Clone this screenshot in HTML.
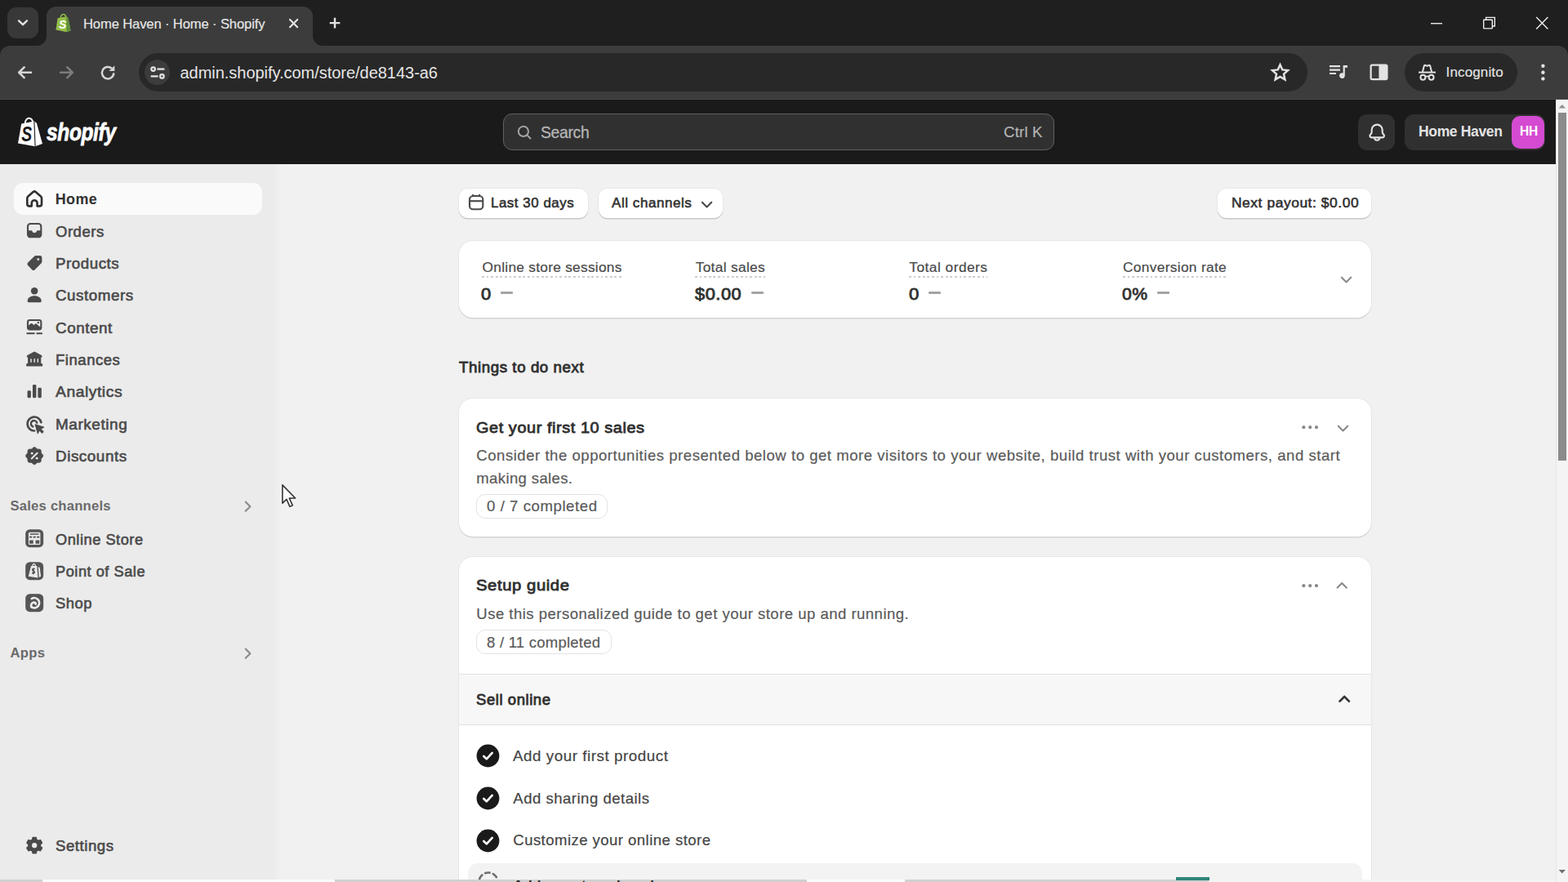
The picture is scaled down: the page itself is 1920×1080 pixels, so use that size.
<!DOCTYPE html>
<html lang="en"><head><meta charset="utf-8"><title>Home Haven · Home · Shopify</title>
<style>
*{box-sizing:border-box;margin:0;padding:0}
html,body{width:1920px;height:1080px;overflow:hidden;background:#f1f1f1;font-family:"Liberation Sans",sans-serif}
#root{position:relative;width:1920px;height:1080px;overflow:hidden}
#root div,#root svg,.t{position:absolute}
.t{white-space:nowrap;line-height:1;display:block;transform-origin:0 50%}
/* chrome */
.tabstrip{left:0;top:0;width:1920px;height:80px;background:#1f1f1f}
.tabsearch{left:9px;top:9px;width:38px;height:38px;border-radius:11px;background:#383838}
.tab{left:57px;top:8px;width:326px;height:49px;background:#3c3c3c;border-radius:12px 12px 0 0}
.tabfl{left:45px;top:44px;width:12px;height:12px;background:radial-gradient(circle at 0 0,rgba(0,0,0,0) 11.5px,#3c3c3c 12.5px)}
.tabfr{left:383px;top:44px;width:12px;height:12px;background:radial-gradient(circle at 100% 0,rgba(0,0,0,0) 11.5px,#3c3c3c 12.5px)}
.toolbar{left:0;top:56px;width:1920px;height:66px;background:#3c3c3c;border-radius:12px 12px 0 0;border-bottom:1px solid #4a4a4a}
.omni{left:170px;top:65px;width:1431px;height:47px;border-radius:24px;background:#282828}
.omnichip{left:177px;top:73px;width:31px;height:31px;border-radius:16px;background:#3c3c3c}
.incog{left:1720px;top:65px;width:138px;height:47px;border-radius:24px;background:#282828}
/* shopify bar */
.sbar{left:0;top:122px;width:1905px;height:79px;background:#1a1a1a}
.search{left:616px;top:139px;width:675px;height:45px;border-radius:11px;background:#303030;border:1.4px solid #616161}
.bellbtn{left:1663px;top:140px;width:45px;height:44px;border-radius:11px;background:#303030}
.store{left:1720px;top:140px;width:172px;height:44px;border-radius:11px;background:#303030}
.avatar{left:1851px;top:142px;width:40px;height:40px;border-radius:10px;background:#d44bd1}
/* scrollbar */
.sbtrack{left:1905px;top:122px;width:15px;height:958px;background:#f4f4f4;border-left:1px solid #e6e6e6}
.sbthumb{left:1908px;top:138px;width:10px;height:426px;background:#8b8b8b}
/* sidebar */
.side{left:0;top:201px;width:346px;height:879px;background:linear-gradient(90deg,#ebebeb 0,#ebebeb 334px,#f1f1f1 346px)}
.navsel{left:17px;top:224px;width:304px;height:39px;border-radius:11px;background:#fafafa}
/* main */
.btn{background:#fff;border-radius:11px;box-shadow:0 1.5px 0 0 #c9c9c9,0 0 0 1px rgba(0,0,0,.04)}
.card{background:#fff;border-radius:17px;box-shadow:0 1.5px 0 0 #d4d4d4,0 0 0 1px rgba(0,0,0,.045)}
.badge{border:1.4px solid #e3e3e3;border-radius:11px;background:#fff}
.dot{height:2.5px;background:repeating-linear-gradient(90deg,#cdcdcd 0 2.8px,transparent 2.8px 5.6px)}
.dash{height:2.4px;background:#a3a3a3;border-radius:1px}
.band{left:562px;top:825px;width:1117px;height:63px;background:#f7f7f7;border-top:1.4px solid #e3e3e3;border-bottom:1.4px solid #e3e3e3}
.hl{left:573px;top:1056.5px;width:1095px;height:60px;border-radius:12px;background:#f3f3f3}
.bstrip{top:1077px;height:3px}
#root .g{position:static;display:block;width:0;height:0}

</style></head><body>
<div id="root">
<!-- ===== browser chrome ===== -->
<div class="tabstrip"></div>
<div class="tabsearch"></div>
<div class="toolbar"></div>
<div class="tab"></div><div class="tabfl"></div><div class="tabfr"></div>
<div class="omni"></div><div class="omnichip"></div>
<div class="incog"></div>
<!-- ===== shopify top bar ===== -->
<div class="sbar"></div>
<div class="search"></div>
<div class="bellbtn"></div>
<div class="store"></div><div class="avatar"></div>
<!-- ===== scrollbar ===== -->
<div class="sbtrack"></div><div class="sbthumb"></div>
<!-- ===== sidebar ===== -->
<div class="side"></div>
<div class="navsel"></div>
<!-- ===== main ===== -->
<div class="btn" style="left:562px;top:231px;width:158px;height:36px"></div>
<div class="btn" style="left:733px;top:231px;width:152px;height:36px"></div>
<div class="btn" style="left:1491px;top:231px;width:188px;height:36px"></div>
<div class="card" style="left:562px;top:295px;width:1117px;height:94px"></div>
<div class="dot" style="left:590px;top:337.6px;width:171px"></div>
<div class="dot" style="left:851px;top:337.6px;width:86px"></div>
<div class="dot" style="left:1113px;top:337.6px;width:96px"></div>
<div class="dot" style="left:1375px;top:337.6px;width:127px"></div>
<div class="dash" style="left:613px;top:357.3px;width:15px"></div>
<div class="dash" style="left:920px;top:357.3px;width:15px"></div>
<div class="dash" style="left:1137px;top:357.3px;width:15px"></div>
<div class="dash" style="left:1417px;top:357.3px;width:15px"></div>
<div class="card" style="left:562px;top:488px;width:1117px;height:169px"></div>
<div class="badge" style="left:583px;top:605px;width:161px;height:30px"></div>
<div class="card" style="left:562px;top:682px;width:1117px;height:440px"></div>
<div class="badge" style="left:583px;top:771px;width:166px;height:30px"></div>
<div class="band"></div>
<div class="hl"></div>
<svg style="left:9.00px;top:9.00px" width="38.00" height="38.00" viewBox="0 0 38 38"><path d="M14 16.4 L19 21.2 L24 16.4" fill="none" stroke="#e3e3e3" stroke-width="2.4" stroke-linecap="round" stroke-linejoin="round"/></svg>
<svg style="left:66.00px;top:15.00px" width="24.00" height="26.00" viewBox="0 0 24 26"><path d="M4.6 7.2 L15.2 5.2 L17.4 6.4 L20.6 22.6 L15.6 24.2 L2.4 21.6 Z" fill="#95bf47"/><path d="M15.2 5.2 L17.4 6.4 L20.6 22.6 L15.6 24.2 Z" fill="#5e8e3e"/><path d="M8.2 7 C8.4 3.6 10.4 2.2 12 2.4 C13.8 2.6 14.6 4.4 14.8 6" fill="none" stroke="#95bf47" stroke-width="1.5"/><text x="6.0" y="19.6" font-family="Liberation Sans, sans-serif" font-size="14" font-weight="700" font-style="italic" fill="#fff">S</text></svg>
<svg style="left:350.00px;top:19.00px" width="20.00" height="20.00" viewBox="0 0 20 20"><path d="M5 5 L14.2 14.2 M14.2 5 L5 14.2" stroke="#e3e3e3" stroke-width="2.2" stroke-linecap="round"/></svg>
<svg style="left:400.00px;top:18.00px" width="20.00" height="20.00" viewBox="0 0 20 20"><path d="M10 3.8 V16.4 M3.7 10.1 H16.3" stroke="#e3e3e3" stroke-width="2.4" stroke-linecap="butt"/></svg>
<svg style="left:1749.00px;top:18.00px" width="20.00" height="20.00" viewBox="0 0 20 20"><path d="M3 10.75 H17" stroke="#f0f0f0" stroke-width="1.4"/></svg>
<svg style="left:1813.00px;top:18.00px" width="20.00" height="20.00" viewBox="0 0 20 20"><rect x="3.7" y="6.3" width="10.6" height="10.6" rx=".6" fill="none" stroke="#f0f0f0" stroke-width="1.4"/><path d="M6.6 6 V3.4 H17.3 V14 H14.6" fill="none" stroke="#f0f0f0" stroke-width="1.4"/></svg>
<svg style="left:1878.00px;top:18.00px" width="20.00" height="20.00" viewBox="0 0 20 20"><path d="M3.2 3 L17.4 17.4 M17.4 3 L3.2 17.4" stroke="#f0f0f0" stroke-width="1.4"/></svg>
<svg style="left:19.00px;top:77.00px" width="24.00" height="24.00" viewBox="0 0 24 24"><path d="M20 11.75 H5 M11.4 4.6 L4.2 11.75 L11.4 18.9" fill="none" stroke="#d6d6d6" stroke-width="2.5" stroke-linejoin="round"/></svg>
<svg style="left:69.00px;top:77.00px" width="24.00" height="24.00" viewBox="0 0 24 24"><path d="M4 11.75 H19 M12.6 4.6 L19.8 11.75 L12.6 18.9" fill="none" stroke="#7c7c7c" stroke-width="2.5" stroke-linejoin="round"/></svg>
<svg style="left:119.50px;top:76.50px" width="24.00" height="24.00" viewBox="0 0 24 24"><path d="M19.3 12.4 a7.2 7.2 0 1 1 -2.4 -5.6" fill="none" stroke="#d6d6d6" stroke-width="2.5"/><path d="M20.3 3.2 V10 H13.5 Z" fill="#d6d6d6"/></svg>
<svg style="left:180.50px;top:76.50px" width="24.00" height="24.00" viewBox="0 0 24 24"><circle cx="6.6" cy="7.6" r="2.3" fill="none" stroke="#e3e3e3" stroke-width="2.2"/><path d="M11.4 7.6 H20.4" stroke="#e3e3e3" stroke-width="2.3"/><circle cx="17.4" cy="16.4" r="2.3" fill="none" stroke="#e3e3e3" stroke-width="2.2"/><path d="M3.6 16.4 H12.6" stroke="#e3e3e3" stroke-width="2.3"/></svg>
<svg style="left:1555.00px;top:76.00px" width="25.00" height="25.00" viewBox="0 0 25 25"><path d="M12.5 3.2 L15.3 9.4 L22 10.1 L17 14.7 L18.4 21.4 L12.5 18 L6.6 21.4 L8 14.7 L3 10.1 L9.7 9.4 Z" fill="none" stroke="#e3e3e3" stroke-width="2.5" stroke-linejoin="miter"/></svg>
<svg style="left:1626.00px;top:77.00px" width="26.00" height="22.00" viewBox="0 0 26 22"><path d="M2 4.2 H15 M2 8.6 H15 M2 13 H10" stroke="#e3e3e3" stroke-width="2.2"/><path d="M18.6 3 H24 V5.8 H20.8 V15.6 a3.4 3.4 0 1 1 -2.2 -3.2 Z" fill="#e3e3e3"/></svg>
<svg style="left:1677.00px;top:78.00px" width="23.00" height="21.00" viewBox="0 0 23 21"><rect x="1.6" y="1.6" width="19.8" height="17.6" rx="1.6" fill="none" stroke="#e3e3e3" stroke-width="2.2"/><rect x="11.4" y="2" width="9.6" height="17" fill="#e3e3e3"/></svg>
<svg style="left:1735.00px;top:76.00px" width="25.00" height="25.00" viewBox="0 0 25 25"><path d="M2 12.6 H23" stroke="#e3e3e3" stroke-width="2"/><path d="M6.9 12 L8.9 4.6 Q9.2 3.6 10.2 3.9 L12.5 4.7 L14.8 3.9 Q15.8 3.6 16.1 4.6 L18.100 12" fill="none" stroke="#e3e3e3" stroke-width="2" stroke-linejoin="round"/><circle cx="7.4" cy="18.8" r="3" fill="none" stroke="#e3e3e3" stroke-width="2"/><circle cx="17.6" cy="18.8" r="3" fill="none" stroke="#e3e3e3" stroke-width="2"/><path d="M10.2 18 Q12.5 16.6 14.8 18" fill="none" stroke="#e3e3e3" stroke-width="1.8"/></svg>
<svg style="left:1883.00px;top:76.00px" width="12.00" height="25.00" viewBox="0 0 12 25"><circle cx="6.4" cy="4.8" r="2.2" fill="#e3e3e3"/><circle cx="6.4" cy="12.7" r="2.2" fill="#e3e3e3"/><circle cx="6.4" cy="20.4" r="2.2" fill="#e3e3e3"/></svg>
<svg style="left:1905.00px;top:122.00px" width="15.00" height="16.00" viewBox="0 0 15 16"><path d="M3.6 10.6 L7.8 6 L12 10.6 Z" fill="#8f8f8f"/></svg>
<svg style="left:1905.00px;top:1060.00px" width="15.00" height="16.00" viewBox="0 0 15 16"><path d="M3.6 5 L7.8 9.6 L12 5 Z" fill="#6f6f6f"/></svg>
<svg style="left:20.00px;top:142.00px" width="34.00" height="39.00" viewBox="0 0 34 39"><path d="M6.2 9.6 L21.6 6.6 L24.8 8.4 L32 34 L23 37.2 L2 33.4 Z" fill="#fff"/><path d="M21.9 7 L23.1 37" stroke="#1a1a1a" stroke-width="1.1"/><path d="M10.6 9.4 C11 4.6 13.6 2.4 16 2.8 C18.6 3.2 20 6 20.4 8.2" fill="none" stroke="#fff" stroke-width="1.9"/><text transform="translate(6.200 30.600) scale(.760 1)" font-family="Liberation Sans, sans-serif" font-size="25.500" font-weight="700" font-style="italic" fill="#1a1a1a">S</text></svg>
<svg style="left:627.83px;top:147.63px" width="28.33" height="28.33" viewBox="0 0 20 20" ><g fill="#a6a6a6"><path transform="translate(1 1) scale(.9)" fill-rule="evenodd" d="M12.323 13.383a5.5 5.5 0 1 1 1.06-1.06l2.897 2.897a.75.75 0 1 1-1.06 1.06l-2.897-2.897Zm.677-4.383a4 4 0 1 1-8 0 4 4 0 0 1 8 0Z"/></g></svg>
<svg style="left:1671.53px;top:148.13px" width="28.33" height="28.33" viewBox="0 0 20 20" ><g fill="#e3e3e3"><path d="M10 3.25a4.6 4.6 0 0 0-4.6 4.6v1.6c0 .7-.25 1.38-.7 1.92l-.55.66a1.45 1.45 0 0 0 1.1 2.37h9.5a1.45 1.45 0 0 0 1.1-2.37l-.55-.66a3 3 0 0 1-.7-1.92v-1.6a4.6 4.6 0 0 0-4.6-4.6Z" fill="none" stroke="#e3e3e3" stroke-width="1.5"/><path d="M7.900 14.700a2.100 2.100 0 0 0 4.200 0" fill="none" stroke="#e3e3e3" stroke-width="1.500"/></g></svg>
<svg style="left:27.53px;top:228.83px" width="28.33" height="28.33" viewBox="0 0 20 20" ><g fill="#303030"><path d="M8.900 4.300 Q10 3.350 11.100 4.300 L15.500 8.100 Q16.250 8.750 16.250 9.700 V14.600 A1.900 1.900 0 0 1 14.350 16.500 H12.400 V13.900 A2.400 2.400 0 0 0 7.600 13.900 V16.500 H5.650 A1.900 1.900 0 0 1 3.750 14.600 V9.700 Q3.750 8.750 4.500 8.100 Z" fill="none" stroke="#303030" stroke-width="1.850" stroke-linejoin="round"/></g></svg>
<svg style="left:27.53px;top:268.33px" width="28.33" height="28.33" viewBox="0 0 20 20" ><g fill="#4a4a4a"><path fill-rule="evenodd" d="M6.5 3.5h7a3 3 0 0 1 3 3v7a3 3 0 0 1-3 3h-7a3 3 0 0 1-3-3v-7a3 3 0 0 1 3-3Zm0 1.5A1.5 1.5 0 0 0 5 6.5V10h2.2c.45 0 .8.3.95.7a1.95 1.95 0 0 0 3.7 0c.15-.4.5-.7.95-.7H15V6.5A1.5 1.5 0 0 0 13.500 5h-7Z"/></g></svg>
<svg style="left:27.53px;top:307.83px" width="28.33" height="28.33" viewBox="0 0 20 20" ><g fill="#4a4a4a"><path fill-rule="evenodd" d="M11.2 3.5h3.55a1.75 1.75 0 0 1 1.75 1.75V8.8c0 .46-.18.9-.51 1.24l-5.6 5.6a1.75 1.75 0 0 1-2.48 0l-3.55-3.55a1.75 1.75 0 0 1 0-2.48l5.6-5.6c.33-.33.78-.51 1.24-.51Zm2.05 4.25a1 1 0 1 0 0-2 1 1 0 0 0 0 2Z"/></g></svg>
<svg style="left:27.53px;top:346.83px" width="28.33" height="28.33" viewBox="0 0 20 20" ><g fill="#4a4a4a"><circle cx="10" cy="6.5" r="3"/><path d="M4 15.1c0-2.6 2.7-4.35 6-4.35s6 1.75 6 4.35c0 .8-.65 1.4-1.45 1.4h-9.1C4.650 16.500 4 15.900 4 15.100Z"/></g></svg>
<svg style="left:27.53px;top:386.33px" width="28.33" height="28.33" viewBox="0 0 20 20" ><g fill="#4a4a4a"><path fill-rule="evenodd" d="M5.9 3.5h8.2a2.4 2.4 0 0 1 2.4 2.400v4.700a2.4 2.4 0 0 1-2.400 2.4H5.900a2.4 2.4 0 0 1-2.400-2.400V5.900a2.4 2.4 0 0 1 2.400-2.400Zm-.900 2.400v2.900l1.700-1.500a1.100 1.100 0 0 1 1.450 0l1.300 1.150 1.050-.85a1.100 1.100 0 0 1 1.400 0l3.100 2.600V5.900a.900.900 0 0 0-.900-.900H5.900a.900.900 0 0 0-.900.900Zm8.250 1.350a.9.9 0 1 0 0-1.800.9.9 0 0 0 0 1.800Z"/><path d="M3.75 15h6.000a.75.75 0 0 1 0 1.500h-6.000a.75.750 0 0 1 0-1.500Zm8.500 0h4.000a.75.75 0 0 1 0 1.500h-4.000a.750.750 0 0 1 0-1.500Z"/></g></svg>
<svg style="left:27.53px;top:425.83px" width="28.33" height="28.33" viewBox="0 0 20 20" ><g fill="#4a4a4a"><path d="M9.200 3.450a1.700 1.700 0 0 1 1.600 0l5 2.700c.550.300.800.750.800 1.300v.100c0 .350-.300.650-.650.650H15.700V13.500h.300c.600 0 1.100.500 1.100 1.100v.500c0 .400-.300.700-.700.700H3.600a.700.700 0 0 1-.700-.700v-.500c0-.600.500-1.100 1.100-1.100h.300V8.200H4.050a.650.650 0 0 1-.650-.650v-.100c0-.550.250-1 .800-1.300l5-2.700Z"/><path d="M6.550 9.300h1v3.300h-1zM9.500 9.300h1v3.300h-1zM12.450 9.300h1v3.300h-1z" fill="#ebebeb"/></g></svg>
<svg style="left:27.53px;top:465.33px" width="28.33" height="28.33" viewBox="0 0 20 20" ><g fill="#4a4a4a"><rect x="3.900" y="9.400" width="3.100" height="6.300" rx="1"/><rect x="8.450" y="4.200" width="3.100" height="11.500" rx="1"/><rect x="13" y="6.800" width="3.100" height="8.900" rx="1"/></g></svg>
<svg style="left:27.53px;top:504.83px" width="28.33" height="28.33" viewBox="0 0 20 20" ><g fill="#4a4a4a"><path d="M9.900 15.900a6 6 0 1 1 5.900-7.300" fill="none" stroke="#4a4a4a" stroke-width="1.900" stroke-linecap="round"/><path d="M8.700 12.300a2.700 2.700 0 1 1 3.500-3.400" fill="none" stroke="#4a4a4a" stroke-width="1.800" stroke-linecap="round"/><path d="M10.700 10.400 18 12.800 15.300 14.300 17.700 16.700 16.600 17.800 14.200 15.400 12.900 18.100Z" stroke="#4a4a4a" stroke-width=".800" stroke-linejoin="round"/></g></svg>
<svg style="left:27.53px;top:544.33px" width="28.33" height="28.33" viewBox="0 0 20 20" ><g fill="#4a4a4a"><path d="M10.00 2.45 L10.49 2.54 L10.95 2.79 L11.37 3.13 L11.74 3.50 L12.10 3.82 L12.47 4.04 L12.89 4.15 L13.36 4.18 L13.89 4.18 L14.43 4.23 L14.93 4.38 L15.34 4.66 L15.62 5.07 L15.77 5.57 L15.82 6.11 L15.82 6.64 L15.85 7.11 L15.96 7.53 L16.18 7.90 L16.50 8.26 L16.87 8.63 L17.21 9.05 L17.46 9.51 L17.55 10.00 L17.46 10.49 L17.21 10.95 L16.87 11.37 L16.50 11.74 L16.18 12.10 L15.96 12.47 L15.85 12.89 L15.82 13.36 L15.82 13.89 L15.77 14.43 L15.62 14.93 L15.34 15.34 L14.93 15.62 L14.43 15.77 L13.89 15.82 L13.36 15.82 L12.89 15.85 L12.47 15.96 L12.10 16.18 L11.74 16.50 L11.37 16.87 L10.95 17.21 L10.49 17.46 L10.00 17.55 L9.51 17.46 L9.05 17.21 L8.63 16.87 L8.26 16.50 L7.90 16.18 L7.53 15.96 L7.11 15.85 L6.64 15.82 L6.11 15.82 L5.57 15.77 L5.07 15.62 L4.66 15.34 L4.38 14.93 L4.23 14.43 L4.18 13.89 L4.18 13.36 L4.15 12.89 L4.04 12.47 L3.82 12.10 L3.50 11.74 L3.13 11.37 L2.79 10.95 L2.54 10.49 L2.45 10.00 L2.54 9.51 L2.79 9.05 L3.13 8.63 L3.50 8.26 L3.82 7.90 L4.04 7.53 L4.15 7.11 L4.18 6.64 L4.18 6.11 L4.23 5.57 L4.38 5.07 L4.66 4.66 L5.07 4.38 L5.57 4.23 L6.11 4.18 L6.64 4.18 L7.11 4.15 L7.53 4.04 L7.90 3.82 L8.26 3.50 L8.63 3.13 L9.05 2.79 L9.51 2.54Z" stroke="#4a4a4a" stroke-width=".400" stroke-linejoin="round"/><path d="M7.600 12.400l4.800-4.800" stroke="#ebebeb" stroke-width="1.400" stroke-linecap="round"/><circle cx="7.900" cy="7.900" r="1" fill="#ebebeb"/><circle cx="12.100" cy="12.100" r="1" fill="#ebebeb"/></g></svg>
<svg style="left:288.83px;top:605.83px" width="28.33" height="28.33" viewBox="0 0 20 20" ><g fill="#8a8a8a"><path d="M7.720 14.530a.750.750 0 0 1 0-1.060l3.470-3.470-3.470-3.470a.750.750 0 0 1 1.060-1.060l4 4a.750.750 0 0 1 0 1.060l-4 4a.750.750 0 0 1-1.060 0Z"/></g></svg>
<svg style="left:288.83px;top:785.83px" width="28.33" height="28.33" viewBox="0 0 20 20" ><g fill="#8a8a8a"><path d="M7.720 14.530a.750.750 0 0 1 0-1.060l3.470-3.470-3.470-3.470a.750.750 0 0 1 1.060-1.060l4 4a.750.750 0 0 1 0 1.060l-4 4a.750.750 0 0 1-1.060 0Z"/></g></svg>
<svg style="left:27.53px;top:645.33px" width="28.33" height="28.33" viewBox="0 0 20 20" ><g fill="#555555"><rect x="2.250" y="2.250" width="15.500" height="15.500" rx="3.700"/><rect x="4.900" y="4.700" width="10.200" height="10.900" rx="1.100" fill="#ebebeb"/><path d="M6.200 6.350h7.600" stroke="#4a4a4a" stroke-width="1"/><path d="M5.700 8.900h2.200M8.900 8.900h2.200M12.100 8.900h2.200" stroke="#4a4a4a" stroke-width="1.300"/><path d="M5.700 11.600h3.300v3.100h-3.300zM11 11.600h3.300v3.100H11z"/></g></svg>
<svg style="left:27.53px;top:684.83px" width="28.33" height="28.33" viewBox="0 0 20 20" ><g fill="#555555"><rect x="2.250" y="2.250" width="15.500" height="15.500" rx="3.700"/><path d="M7.100 5.700 L12.200 5.700 L13 15.800 L4.800 14.700 Z" fill="#ebebeb"/><path d="M13.300 6.300 L14.600 7 L15.600 14.600 L13.900 15.600 Z" fill="#ebebeb"/><path d="M8.300 5.900c.100-1.500.800-2.100 1.500-2 .700.100 1.100.900 1.200 2" fill="none" stroke="#ebebeb" stroke-width=".900"/><path d="M10.300 8.300c-1-.500-2-.100-2 .700 0 1.100 1.800 1 1.800 2.100 0 .800-1.100 1.100-2.200.500" fill="none" stroke="#4a4a4a" stroke-width="1.100"/><path d="M9.300 7.300 L8.900 12.900" stroke="#4a4a4a" stroke-width=".600"/></g></svg>
<svg style="left:27.53px;top:724.33px" width="28.33" height="28.33" viewBox="0 0 20 20" ><g fill="#555555"><rect x="2.250" y="2.250" width="15.500" height="15.500" rx="3.700"/><path d="M7.600 6.400 A4.300 4.300 0 1 1 7.300 13.500" fill="none" stroke="#ebebeb" stroke-width="1.900" stroke-linecap="round"/><path d="M7.300 13.500 C6.600 11.500 7.700 9.700 9.600 9.600 C10.700 9.600 11.200 10.300 11.100 11" fill="none" stroke="#ebebeb" stroke-width="1.900" stroke-linecap="round"/></g></svg>
<svg style="left:27.63px;top:1020.83px" width="28.33" height="28.33" viewBox="0 0 20 20" ><g fill="#4a4a4a"><path d="M8.65 3.34 L11.35 3.34 L11.70 5.19 L13.31 6.12 L15.10 5.50 L16.45 7.84 L15.01 9.07 L15.01 10.93 L16.45 12.16 L15.10 14.50 L13.31 13.88 L11.70 14.81 L11.35 16.66 L8.65 16.66 L8.30 14.81 L6.69 13.88 L4.90 14.50 L3.55 12.16 L4.99 10.93 L4.99 9.07 L3.55 7.84 L4.90 5.50 L6.69 6.12 L8.30 5.19Z" stroke="#4a4a4a" stroke-width="1.300" stroke-linejoin="round"/><circle cx="10" cy="10" r="2.200" fill="#ebebeb"/></g></svg>
<svg style="left:568.83px;top:234.13px" width="28.33" height="28.33" viewBox="0 0 20 20" ><g fill="#4a4a4a"><rect x="4.250" y="4.250" width="11.500" height="11.500" rx="2.900" fill="none" stroke="#4a4a4a" stroke-width="1.500"/><path d="M4.250 8.600h11.500" stroke="#4a4a4a" stroke-width="1.500"/><path d="M7.200 3.400v1M12.800 3.400v1" stroke="#4a4a4a" stroke-width="1.500" stroke-linecap="round"/></g></svg>
<svg style="left:850.63px;top:234.73px" width="28.33" height="28.33" viewBox="0 0 20 20" ><g fill="#4a4a4a"><path fill-rule="evenodd" d="M5.720 8.470a.750.750 0 0 1 1.060 0l3.470 3.470 3.470-3.470a.750.750 0 1 1 1.060 1.060l-4 4a.750.750 0 0 1-1.060 0l-4-4a.750.750 0 0 1 0-1.060Z"/></g></svg>
<svg style="left:1634.13px;top:327.03px" width="28.33" height="28.33" viewBox="0 0 20 20" ><g fill="#8a8a8a"><path fill-rule="evenodd" d="M5.720 8.470a.750.750 0 0 1 1.060 0l3.470 3.470 3.470-3.470a.750.750 0 1 1 1.060 1.060l-4 4a.750.750 0 0 1-1.060 0l-4-4a.750.750 0 0 1 0-1.060Z"/></g></svg>
<svg style="left:1589.83px;top:509.33px" width="28.33" height="28.33" viewBox="0 0 20 20" ><g fill="#8a8a8a"><circle cx="4.500" cy="10" r="1.450"/><circle cx="10" cy="10" r="1.450"/><circle cx="15.500" cy="10" r="1.450"/></g></svg>
<svg style="left:1629.53px;top:508.73px" width="28.33" height="28.33" viewBox="0 0 20 20" ><g fill="#8a8a8a"><path fill-rule="evenodd" d="M5.720 8.470a.750.750 0 0 1 1.060 0l3.470 3.470 3.470-3.470a.750.750 0 1 1 1.060 1.060l-4 4a.750.750 0 0 1-1.060 0l-4-4a.750.750 0 0 1 0-1.060Z"/></g></svg>
<svg style="left:1589.83px;top:703.33px" width="28.33" height="28.33" viewBox="0 0 20 20" ><g fill="#8a8a8a"><circle cx="4.500" cy="10" r="1.450"/><circle cx="10" cy="10" r="1.450"/><circle cx="15.500" cy="10" r="1.450"/></g></svg>
<svg style="left:1629.33px;top:702.83px" width="28.33" height="28.33" viewBox="0 0 20 20" ><g fill="#8a8a8a"><path fill-rule="evenodd" d="M14.530 12.280a.750.750 0 0 1-1.060 0l-3.470-3.470-3.470 3.470a.750.750 0 0 1-1.060-1.060l4-4a.750.750 0 0 1 1.060 0l4 4a.750.750 0 0 1 0 1.060Z"/></g></svg>
<svg style="left:1631.83px;top:842.33px" width="28.33" height="28.33" viewBox="0 0 20 20" stroke="#303030" stroke-width=".500"><g fill="#303030"><path fill-rule="evenodd" d="M14.530 12.280a.750.750 0 0 1-1.060 0l-3.470-3.470-3.470 3.470a.750.750 0 0 1-1.060-1.060l4-4a.750.750 0 0 1 1.060 0l4 4a.750.750 0 0 1 0 1.060Z"/></g></svg>
<svg style="left:582.50px;top:911.20px" width="29.00" height="29.00" viewBox="0 0 29 29"><circle cx="14.500" cy="14.500" r="13.900" fill="#1a1a1a"/><path d="M9.300 15 L12.800 18.400 L19.700 10.900" fill="none" stroke="#fff" stroke-width="2.700" stroke-linecap="round" stroke-linejoin="round"/></svg>
<svg style="left:582.50px;top:963.20px" width="29.00" height="29.00" viewBox="0 0 29 29"><circle cx="14.500" cy="14.500" r="13.900" fill="#1a1a1a"/><path d="M9.300 15 L12.800 18.400 L19.700 10.900" fill="none" stroke="#fff" stroke-width="2.700" stroke-linecap="round" stroke-linejoin="round"/></svg>
<svg style="left:582.50px;top:1014.80px" width="29.00" height="29.00" viewBox="0 0 29 29"><circle cx="14.500" cy="14.500" r="13.900" fill="#1a1a1a"/><path d="M9.300 15 L12.800 18.400 L19.700 10.900" fill="none" stroke="#fff" stroke-width="2.700" stroke-linecap="round" stroke-linejoin="round"/></svg>
<svg style="left:584.50px;top:1066.50px" width="26.00" height="26.00" viewBox="0 0 26 26"><circle cx="13" cy="13" r="11.500" fill="none" stroke="#707070" stroke-width="2.700" stroke-dasharray="5.500 4.500" stroke-linecap="round"/></svg>
<svg style="left:344.00px;top:592.00px" width="21.00" height="30.45" viewBox="0 0 20 29"><path d="M1.800 1.800 V23 L6.600 18.400 L10.400 27 L13.600 25.600 L9.800 17.200 H16.800 Z" fill="#fff" stroke="#333" stroke-width="1.500" stroke-linejoin="round"/></svg>
<!-- bottom strip -->
<div class="bstrip" style="left:0;width:1905px;background:#d0d0d0"></div>
<div class="bstrip" style="left:52px;width:358px;background:#fbfbfb"></div>
<div class="bstrip" style="left:988px;width:120px;background:#fbfbfb"></div>
<div class="bstrip" style="left:1480px;width:425px;background:#f4f4f4"></div>
<div style="left:1440px;top:1074px;width:41px;height:4px;background:#2f8577"></div>

<div class="g" role="banner" aria-label="Browser window">
<span class="t" style="left:102.0px;top:22.2px;font-size:16.6px;font-weight:400;color:#e8e8e8;letter-spacing:-0.133px;-webkit-text-stroke:0.15px #e8e8e8;">Home Haven · Home · Shopify</span>
<span class="t" style="left:220.5px;top:78.9px;font-size:20.0px;font-weight:400;color:#e6e6e6;letter-spacing:-0.031px;">admin.shopify.com/store/de8143-a6</span>
<span class="t" style="left:1770.6px;top:80.1px;font-size:17px;font-weight:400;color:#e3e3e3;letter-spacing:0.125px;-webkit-text-stroke:0.15px #e3e3e3;">Incognito</span>
</div>
<header class="g">
<span class="t" style="left:57.0px;top:146.6px;font-size:29.5px;font-weight:700;color:#ffffff;letter-spacing:-0.350px;transform:scaleX(0.8268);-webkit-text-stroke:0.8px #ffffff;font-style:italic;">shopify</span>
<span class="t" style="left:662.0px;top:152.1px;font-size:20.2px;font-weight:400;color:#b5b5b5;letter-spacing:-0.350px;transform:scaleX(0.9595);-webkit-text-stroke:0.3px #b5b5b5;">Search</span>
<span class="t" style="left:1229.0px;top:153.2px;font-size:18.6px;font-weight:400;color:#b5b5b5;letter-spacing:0.203px;-webkit-text-stroke:0.2px #b5b5b5;">Ctrl K</span>
<span class="t" style="left:1737.1px;top:152.3px;font-size:18px;font-weight:700;color:#e3e3e3;letter-spacing:-0.350px;transform:scaleX(0.9717);">Home Haven</span>
<span class="t" style="left:1860.8px;top:153.3px;font-size:16.8px;font-weight:700;color:#ffffff;letter-spacing:-0.350px;transform:scaleX(0.9247);">HH</span>
</header>
<nav class="g" aria-label="Main navigation">
<span class="t" style="left:67.7px;top:235.8px;font-size:17.9px;font-weight:700;color:#303030;letter-spacing:0.427px;">Home</span>
<span class="t" style="left:67.5px;top:274.7px;font-size:18.0px;font-weight:400;color:#4a4a4a;letter-spacing:0.550px;transform:scaleX(1.0231);-webkit-text-stroke:0.6px #4a4a4a;">Orders</span>
<span class="t" style="left:67.5px;top:314.0px;font-size:18.0px;font-weight:400;color:#4a4a4a;letter-spacing:0.550px;transform:scaleX(1.0374);-webkit-text-stroke:0.6px #4a4a4a;">Products</span>
<span class="t" style="left:67.5px;top:353.3px;font-size:18.0px;font-weight:400;color:#4a4a4a;letter-spacing:0.550px;transform:scaleX(1.0401);-webkit-text-stroke:0.6px #4a4a4a;">Customers</span>
<span class="t" style="left:67.5px;top:392.7px;font-size:18.0px;font-weight:400;color:#4a4a4a;letter-spacing:0.550px;transform:scaleX(1.0430);-webkit-text-stroke:0.6px #4a4a4a;">Content</span>
<span class="t" style="left:67.5px;top:432.0px;font-size:18.0px;font-weight:400;color:#4a4a4a;letter-spacing:0.550px;transform:scaleX(1.0247);-webkit-text-stroke:0.6px #4a4a4a;">Finances</span>
<span class="t" style="left:67.5px;top:471.4px;font-size:18.0px;font-weight:400;color:#4a4a4a;letter-spacing:0.550px;transform:scaleX(1.0663);-webkit-text-stroke:0.6px #4a4a4a;">Analytics</span>
<span class="t" style="left:67.5px;top:510.8px;font-size:18.0px;font-weight:400;color:#4a4a4a;letter-spacing:0.550px;transform:scaleX(1.0512);-webkit-text-stroke:0.6px #4a4a4a;">Marketing</span>
<span class="t" style="left:67.5px;top:550.1px;font-size:18.0px;font-weight:400;color:#4a4a4a;letter-spacing:0.550px;transform:scaleX(1.0440);-webkit-text-stroke:0.6px #4a4a4a;">Discounts</span>
<span class="t" style="left:12.5px;top:611.5px;font-size:16.6px;font-weight:700;color:#6a6a6a;letter-spacing:0.237px;">Sales channels</span>
<span class="t" style="left:67.5px;top:651.5px;font-size:18.0px;font-weight:400;color:#4a4a4a;letter-spacing:0.550px;transform:scaleX(1.0084);-webkit-text-stroke:0.6px #4a4a4a;">Online Store</span>
<span class="t" style="left:67.5px;top:690.9px;font-size:18.0px;font-weight:400;color:#4a4a4a;letter-spacing:0.550px;transform:scaleX(1.0076);-webkit-text-stroke:0.6px #4a4a4a;">Point of Sale</span>
<span class="t" style="left:67.5px;top:730.3px;font-size:18.0px;font-weight:400;color:#4a4a4a;letter-spacing:0.550px;transform:scaleX(1.0184);-webkit-text-stroke:0.6px #4a4a4a;">Shop</span>
<span class="t" style="left:12.5px;top:791.5px;font-size:16.6px;font-weight:700;color:#6a6a6a;letter-spacing:0.339px;">Apps</span>
<span class="t" style="left:67.5px;top:1026.9px;font-size:18.0px;font-weight:400;color:#4a4a4a;letter-spacing:0.550px;transform:scaleX(1.0305);-webkit-text-stroke:0.6px #4a4a4a;">Settings</span>
</nav>
<main class="g">
<span class="t" style="left:601.1px;top:240.3px;font-size:16.5px;font-weight:400;color:#303030;letter-spacing:0.550px;transform:scaleX(1.0210);-webkit-text-stroke:0.55px #303030;">Last 30 days</span>
<span class="t" style="left:749.0px;top:240.3px;font-size:16.5px;font-weight:400;color:#303030;letter-spacing:0.550px;transform:scaleX(1.0291);-webkit-text-stroke:0.55px #303030;">All channels</span>
<span class="t" style="left:1507.7px;top:240.3px;font-size:16.5px;font-weight:400;color:#303030;letter-spacing:0.550px;transform:scaleX(1.0523);-webkit-text-stroke:0.55px #303030;">Next payout: $0.00</span>
<span class="t" style="left:590.6px;top:319.0px;font-size:17.3px;font-weight:400;color:#4a4a4a;letter-spacing:0.279px;-webkit-text-stroke:0.2px #4a4a4a;">Online store sessions</span>
<span class="t" style="left:851.7px;top:319.0px;font-size:17.3px;font-weight:400;color:#4a4a4a;letter-spacing:0.334px;-webkit-text-stroke:0.2px #4a4a4a;">Total sales</span>
<span class="t" style="left:1113.3px;top:319.0px;font-size:17.3px;font-weight:400;color:#4a4a4a;letter-spacing:0.491px;-webkit-text-stroke:0.2px #4a4a4a;">Total orders</span>
<span class="t" style="left:1375.0px;top:319.0px;font-size:17.3px;font-weight:400;color:#4a4a4a;letter-spacing:0.336px;-webkit-text-stroke:0.2px #4a4a4a;">Conversion rate</span>
<span class="t" style="left:589.4px;top:349.7px;font-size:20.4px;font-weight:400;color:#303030;transform:scaleX(1.0755);-webkit-text-stroke:0.8px #303030;">0</span>
<span class="t" style="left:850.7px;top:349.7px;font-size:20.4px;font-weight:400;color:#303030;letter-spacing:0.550px;transform:scaleX(1.0633);-webkit-text-stroke:0.8px #303030;">$0.00</span>
<span class="t" style="left:1112.7px;top:349.7px;font-size:20.4px;font-weight:400;color:#303030;transform:scaleX(1.0843);-webkit-text-stroke:0.8px #303030;">0</span>
<span class="t" style="left:1374.0px;top:349.7px;font-size:20.4px;font-weight:400;color:#303030;letter-spacing:0.550px;transform:scaleX(1.0322);-webkit-text-stroke:0.8px #303030;">0%</span>
<span class="t" style="left:561.6px;top:441.4px;font-size:18.2px;font-weight:400;color:#303030;letter-spacing:0.550px;transform:scaleX(1.0295);-webkit-text-stroke:0.8px #303030;">Things to do next</span>
<span class="t" style="left:583.3px;top:513.8px;font-size:19.2px;font-weight:400;color:#303030;letter-spacing:0.550px;transform:scaleX(1.0366);-webkit-text-stroke:0.8px #303030;">Get your first 10 sales</span>
<span class="t" style="left:583.3px;top:548.5px;font-size:18.5px;font-weight:400;color:#5a5a5a;letter-spacing:0.550px;-webkit-text-stroke:0.2px #5a5a5a;">Consider the opportunities presented below to get more visitors to your website, build trust with your customers, and start</span>
<span class="t" style="left:583.3px;top:576.6px;font-size:18.5px;font-weight:400;color:#5a5a5a;letter-spacing:0.383px;-webkit-text-stroke:0.2px #5a5a5a;">making sales.</span>
<span class="t" style="left:596.0px;top:610.9px;font-size:18.5px;font-weight:400;color:#5a5a5a;letter-spacing:0.550px;transform:scaleX(1.0060);-webkit-text-stroke:0.2px #5a5a5a;">0 / 7 completed</span>
<span class="t" style="left:583.3px;top:707.3px;font-size:19.2px;font-weight:400;color:#303030;letter-spacing:0.550px;transform:scaleX(1.0563);-webkit-text-stroke:0.8px #303030;">Setup guide</span>
<span class="t" style="left:583.3px;top:742.5px;font-size:18.5px;font-weight:400;color:#5a5a5a;letter-spacing:0.493px;-webkit-text-stroke:0.2px #5a5a5a;">Use this personalized guide to get your store up and running.</span>
<span class="t" style="left:596.0px;top:777.5px;font-size:18.5px;font-weight:400;color:#5a5a5a;letter-spacing:0.239px;-webkit-text-stroke:0.2px #5a5a5a;">8 / 11 completed</span>
<span class="t" style="left:583.3px;top:848.7px;font-size:17.8px;font-weight:400;color:#303030;letter-spacing:0.550px;transform:scaleX(1.0393);-webkit-text-stroke:0.8px #303030;">Sell online</span>
<span class="t" style="left:628.3px;top:916.9px;font-size:18.5px;font-weight:400;color:#454545;letter-spacing:0.550px;transform:scaleX(1.0139);-webkit-text-stroke:0.2px #454545;">Add your first product</span>
<span class="t" style="left:628.3px;top:968.5px;font-size:18.5px;font-weight:400;color:#454545;letter-spacing:0.519px;-webkit-text-stroke:0.2px #454545;">Add sharing details</span>
<span class="t" style="left:628.3px;top:1020.2px;font-size:18.5px;font-weight:400;color:#454545;letter-spacing:0.476px;-webkit-text-stroke:0.2px #454545;">Customize your online store</span>
<span class="t" style="left:628.3px;top:1075.9px;font-size:18.5px;font-weight:700;color:#303030;letter-spacing:-0.350px;transform:scaleX(0.9826);">Add a custom domain</span>
</main>
</div>
</body></html>
